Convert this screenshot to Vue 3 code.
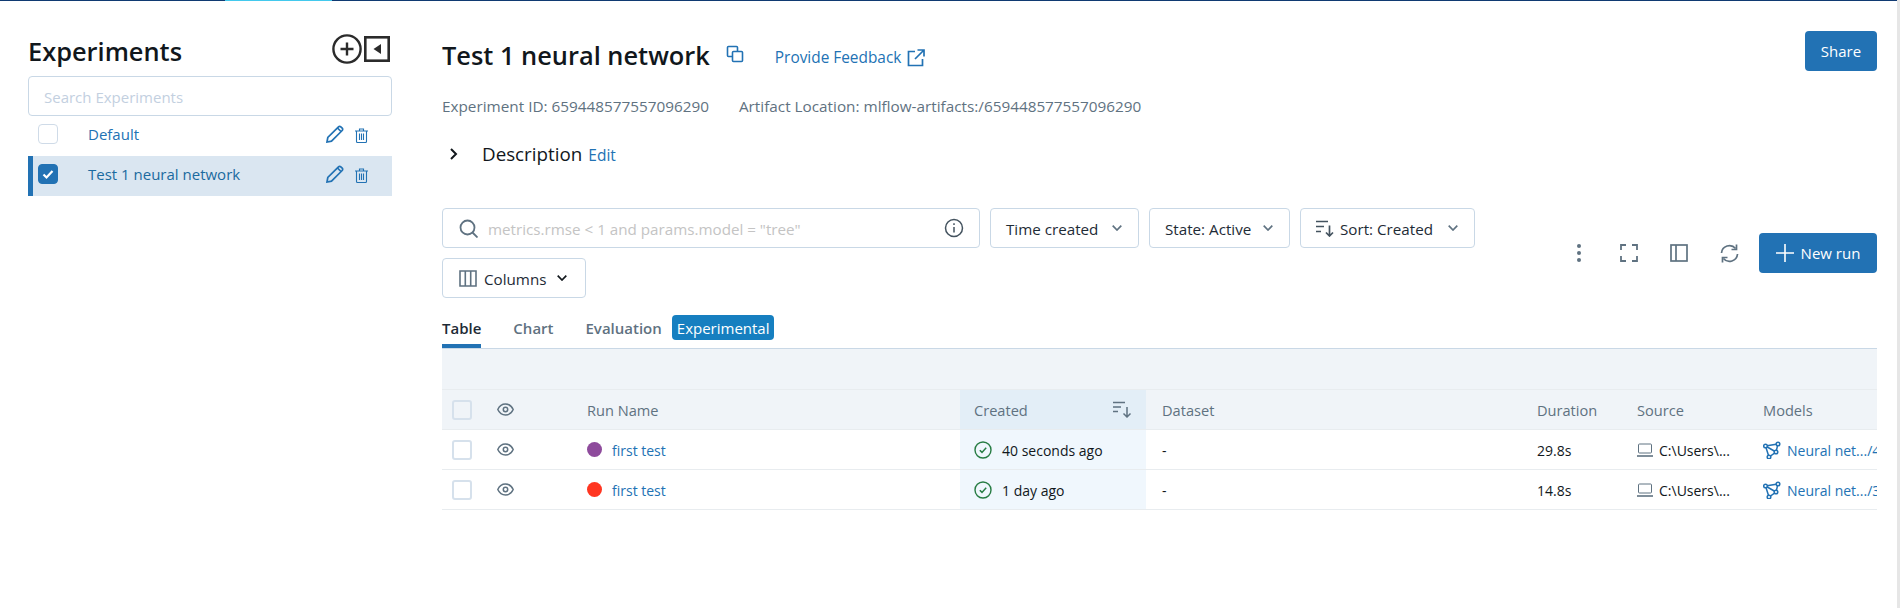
<script setup>
const experiments = [
  { name: 'Default', active: false },
  { name: 'Test 1 neural network', active: true },
]

const runs = [
  { name: 'first test', color: '#8e4b9c', created: '40 seconds ago', duration: '29.8s', model: 'Neural net.../4' },
  { name: 'first test', color: '#ff3621', created: '1 day ago', duration: '14.8s', model: 'Neural net.../3' },
]
</script>

<template>
  <div class="page">
    <div class="topbar"><div class="topbar-accent"></div></div>
    <div class="layout">
      <aside class="sidebar">
        <div class="sidebar-head">
          <h1>Experiments</h1>
          <div class="sidebar-tools">
            <svg width="30" height="30" viewBox="0 0 30 30" fill="none" stroke="#2b2b2b" stroke-width="2.4"><circle cx="15" cy="15" r="13.6" /><path d="M15 8.500v13M8.500 15h13" /></svg>
            <svg class="collapse" width="26" height="26" viewBox="0 0 26 26" fill="none"><rect x="1.300" y="1.300" width="23.400" height="23.400" stroke="#2b2b2b" stroke-width="2.600" /><path d="M17 8v10l-7.500-5z" fill="#2b2b2b" /></svg>
          </div>
        </div>
        <div class="side-search"><span class="txt">Search Experiments</span></div>
        <div v-for="exp in experiments" :key="exp.name" class="exp-row" :class="{ active: exp.active }">
          <span class="exp-check">
            <svg v-if="exp.active" width="14" height="14" viewBox="0 0 14 14" fill="none" stroke="#fff" stroke-width="2.200"><path d="M2.500 7.500l3 3 6-6.500" /></svg>
          </span>
          <span class="exp-name">{{ exp.name }}</span>
          <svg class="exp-edit" width="18" height="18" viewBox="0 0 18 18" fill="none" stroke="#2272b4" stroke-width="1.700"><path d="M1 17l.8-4.500L12.500 1.800a1.600 1.600 0 0 1 2.300 0l1.400 1.400a1.600 1.600 0 0 1 0 2.300L5.500 16.200z" /><path d="M11.500 3l3.500 3.500" /></svg>
          <svg class="exp-delete" width="13" height="15" viewBox="0 0 13 15" fill="none" stroke="#2272b4" stroke-width="1.100"><path d="M0 3h13M4.500 3V1h4v2M1.500 3v10.500a1 1 0 0 0 1 1h8a1 1 0 0 0 1-1V3M4.500 5.500v6.500M6.500 5.500v6.500M8.500 5.500v6.500" /></svg>
        </div>
      </aside>

      <main class="main">
        <div class="head">
          <div class="head-title">
            <h2>Test 1 neural network</h2>
            <svg class="copy-icon" width="18" height="18" viewBox="0 0 18 18" fill="none" stroke="#2272b4" stroke-width="1.600"><rect x="1.500" y="1.500" width="10" height="10" rx="1" /><rect x="6.500" y="6.500" width="10" height="10" rx="1" fill="#fff" /></svg>
            <a class="feedback">Provide Feedback
              <svg width="18" height="18" viewBox="0 0 18 18" fill="none" stroke="#2272b4" stroke-width="1.700"><path d="M8 2.500H1.500v14h14V10M10.500 1H17v6.500M17 1L8 10" /></svg>
            </a>
          </div>
          <button class="btn-primary share">Share</button>
        </div>

        <div class="meta">
          <span>Experiment ID: 659448577557096290</span>
          <span>Artifact Location: mlflow-artifacts:/659448577557096290</span>
        </div>

        <div class="description">
          <svg width="10" height="12" viewBox="0 0 10 12" fill="none" stroke="#11171c" stroke-width="2"><path d="M2 1l5 5-5 5" /></svg>
          <span class="desc-label">Description</span>
          <a class="desc-edit">Edit</a>
        </div>

        <div class="toolbar">
          <div class="filters">
            <div class="run-search">
              <svg width="19" height="19" viewBox="0 0 19 19" fill="none" stroke="#5f7281" stroke-width="1.800"><circle cx="8.500" cy="8.500" r="7" /><path d="M13.500 13.500l5 5" /></svg>
              <span class="run-search-text">metrics.rmse &lt; 1 and params.model = "tree"</span>
              <svg width="20" height="20" viewBox="0 0 20 20" fill="none" stroke="#44535f" stroke-width="1.500"><circle cx="10" cy="10" r="8.500" /><path d="M10 9v5.500M10 5.200v1.800" /></svg>
            </div>
            <div class="dropdown time"><span class="txt">Time created</span>
              <svg class="chev" width="10" height="6" viewBox="0 0 10 6" fill="none" stroke="#5f7281" stroke-width="1.700"><path d="M.7.7L5 5l4.300-4.300" /></svg>
            </div>
            <div class="dropdown state"><span class="txt">State: Active</span>
              <svg class="chev" width="10" height="6" viewBox="0 0 10 6" fill="none" stroke="#5f7281" stroke-width="1.700"><path d="M.7.7L5 5l4.300-4.300" /></svg>
            </div>
            <div class="dropdown sort">
              <svg width="18" height="17" viewBox="0 0 18 17" fill="none" stroke="#44535f" stroke-width="1.700"><path d="M0 1.500h12M0 6.500h8M0 11.500h5M13.500 5.500v10.500M10 12.500l3.500 3.500 3.500-3.500" /></svg>
              <span class="txt">Sort: Created</span>
              <svg class="chev" width="10" height="6" viewBox="0 0 10 6" fill="none" stroke="#5f7281" stroke-width="1.700"><path d="M.7.7L5 5l4.300-4.300" /></svg>
            </div>
            <div class="dropdown columns">
              <svg width="18" height="17" viewBox="0 0 18 17" fill="none" stroke="#5f7281" stroke-width="1.600"><path d="M1 1h16v15H1zM6.300 1v15M11.700 1v15" /></svg>
              <span class="txt">Columns</span>
              <svg class="columns-chev" width="10" height="6" viewBox="0 0 10 6" fill="none" stroke="#11171c" stroke-width="1.700"><path d="M.7.7L5 5l4.300-4.300" /></svg>
            </div>
          </div>
          <div class="actions">
            <span class="action">
              <svg width="4" height="18" viewBox="0 0 4 18" fill="#5f7281"><circle cx="2" cy="2" r="2" /><circle cx="2" cy="9" r="2" /><circle cx="2" cy="16" r="2" /></svg>
            </span>
            <span class="action">
              <svg width="18" height="18" viewBox="0 0 18 18" fill="none" stroke="#5f7281" stroke-width="1.800"><path d="M1 6V1h5M12 1h5v5M17 12v5h-5M6 17H1v-5" /></svg>
            </span>
            <span class="action">
              <svg width="18" height="18" viewBox="0 0 18 18" fill="none" stroke="#5f7281" stroke-width="1.700"><rect x="1" y="1" width="16" height="16" /><path d="M6 1v16" /></svg>
            </span>
            <span class="action">
              <svg width="19" height="19" viewBox="0 0 19 19" fill="none" stroke="#5f7281" stroke-width="1.700"><path d="M1.500 9A8 8 0 0 1 15.600 4.500M17.500 10A8 8 0 0 1 3.400 14.500" /><path d="M16.500.5v5h-5M2.500 18.500v-5h5" /></svg>
            </span>
            <button class="btn-primary new-run">
              <svg width="18" height="18" viewBox="0 0 18 18" fill="none" stroke="#fff" stroke-width="1.600"><path d="M9 0v18M0 9h18" /></svg>
              New run
            </button>
          </div>
        </div>

        <div class="tabs">
          <span class="tab selected">Table</span>
          <span class="tab">Chart</span>
          <span class="tab eval">Evaluation</span>
          <span class="badge">Experimental</span>
        </div>

        <div class="grid-band"></div>
        <div class="grid-row grid-head">
          <div class="cell"><span class="box"></span></div>
          <div class="cell">
            <svg width="17" height="13" viewBox="0 0 17 13" fill="none" stroke="#5f7281" stroke-width="1.500"><path d="M.8 6.500C2.500 2.800 5.200 1 8.500 1s6 1.800 7.700 5.500c-1.700 3.700-4.400 5.500-7.700 5.500S2.500 10.200.8 6.500z" /><circle cx="8.500" cy="6.500" r="2.200" /></svg>
          </div>
          <div class="cell">Run Name</div>
          <div class="cell created-head">
            <span>Created</span>
            <svg width="19" height="17" viewBox="0 0 19 17" fill="none" stroke="#5f7281" stroke-width="1.500"><path d="M0 1.500h12M0 6h8M0 10.500h5M14 6v10M10.500 12.500l3.500 3.500 3.500-3.500" /></svg>
          </div>
          <div class="cell">Dataset</div>
          <div class="cell">Duration</div>
          <div class="cell">Source</div>
          <div class="cell">Models</div>
        </div>
        <div v-for="(run, i) in runs" :key="i" class="grid-row">
          <div class="cell"><span class="box"></span></div>
          <div class="cell">
            <svg width="17" height="13" viewBox="0 0 17 13" fill="none" stroke="#5f7281" stroke-width="1.500"><path d="M.8 6.500C2.500 2.800 5.200 1 8.500 1s6 1.800 7.700 5.500c-1.700 3.700-4.400 5.500-7.700 5.500S2.500 10.200.8 6.500z" /><circle cx="8.500" cy="6.500" r="2.200" /></svg>
          </div>
          <div class="cell run-name">
            <span class="dot" :style="{ background: run.color }"></span>
            <a class="txt">{{ run.name }}</a>
          </div>
          <div class="cell created">
            <svg width="18" height="18" viewBox="0 0 18 18" fill="none" stroke="#277c43" stroke-width="1.400"><circle cx="9" cy="9" r="8" /><path d="M5.800 9.200l2.200 2.200 4.200-4.600" stroke-width="1.500" /></svg>
            <span class="txt">{{ run.created }}</span>
          </div>
          <div class="cell"><span class="txt">-</span></div>
          <div class="cell"><span class="txt">{{ run.duration }}</span></div>
          <div class="cell source">
            <svg width="16" height="14" viewBox="0 0 16 14" fill="none" stroke="#5f7281" stroke-width="1"><rect x="1.500" y="1" width="13" height="9" rx="1" /><path d="M0 13h16" stroke-width="1.600" /></svg>
            <span class="txt">C:\Users\...</span>
          </div>
          <div class="cell model">
            <svg width="18" height="18" viewBox="0 0 18 18" fill="none" stroke="#2272b4" stroke-width="1.500"><path d="M2.500 5L15 3l-2 8-7 5zM2.500 5L13 11" /><circle cx="2.500" cy="5" r="1.800" fill="#fff" /><circle cx="15" cy="3" r="1.800" fill="#fff" /><circle cx="13" cy="11" r="1.800" fill="#fff" /><circle cx="6" cy="16" r="1.800" fill="#fff" /></svg>
            <a class="txt">{{ run.model }}</a>
          </div>
        </div>
      </main>
    </div>
    <div class="scrollbar"></div>
  </div>
</template>

<style scoped>
.page {
  position: relative;
  width: 1900px;
  height: 608px;
  overflow: hidden;
  background: #fff;
  color: #11171c;
  font-family: "Open Sans", "Liberation Sans", sans-serif;
  font-size: 15px;
}

.txt {
  padding-top: 2px;
}

.topbar {
  height: 1px;
  background: #103a72;
}

.topbar-accent {
  width: 107px;
  height: 1px;
  margin-left: 225px;
  background: #43c9ed;
}

.layout {
  display: flex;
  padding: 0 23px 0 28px;
}

.sidebar {
  flex: none;
  width: 364px;
  margin-right: 50px;
  padding-top: 30px;
}

.sidebar-head {
  display: flex;
  align-items: flex-start;
  justify-content: space-between;
  height: 45px;
}

.sidebar-head h1 {
  margin: 0;
  font-size: 25.4px;
  font-weight: 600;
  line-height: 40px;
}

.sidebar-tools {
  display: flex;
  align-items: center;
  gap: 2px;
  margin: 3px 2px 0 0;
}

.side-search {
  display: flex;
  align-items: center;
  box-sizing: border-box;
  height: 40px;
  padding-left: 15px;
  border: 1px solid #c9d8e6;
  border-radius: 4px;
  color: #c3d0df;
}

.exp-row {
  display: flex;
  align-items: center;
  box-sizing: border-box;
  height: 40px;
  padding: 0 0 4px 10px;
  color: #2272b4;
}

.exp-row.active {
  padding-left: 5px;
  border-left: 5px solid #2272b4;
  background: #dae6f1;
  color: #1b6a9f;
}

.exp-check {
  display: flex;
  align-items: center;
  justify-content: center;
  flex: none;
  box-sizing: border-box;
  width: 20px;
  height: 20px;
  border: 1px solid #cfdbe8;
  border-radius: 4px;
  background: #fff;
}

.active .exp-check {
  border-color: #2272b4;
  background: #2272b4;
}

.exp-name {
  flex: 1;
  margin-left: 30px;
}

.exp-edit {
  margin-right: 11px;
}

.exp-delete {
  margin: 2px 24px 0 0;
}

.main {
  flex: 1;
  min-width: 0;
  padding-top: 30px;
}

.head {
  display: flex;
  align-items: flex-start;
  justify-content: space-between;
  height: 40px;
}

.head-title {
  display: flex;
  align-items: center;
  height: 50px;
}

.head-title h2 {
  margin: -2px 0 0;
  font-size: 25.4px;
  font-weight: 600;
  white-space: nowrap;
}

.copy-icon {
  margin: -4px 0 0 16px;
}

.feedback {
  display: flex;
  align-items: center;
  gap: 6px;
  margin: 3px 0 0 31px;
  color: #2272b4;
  font-size: 15.400px;
}

.btn-primary {
  display: flex;
  align-items: center;
  justify-content: center;
  height: 40px;
  border: none;
  border-radius: 4px;
  background: #2272b4;
  color: #fff;
  font: inherit;
  font-size: 15px;
}

.share {
  width: 72px;
}

.new-run {
  gap: 7px;
  width: 118px;
}

.meta {
  display: flex;
  gap: 30px;
  margin-top: 25px;
  color: #5f7281;
  font-size: 15.300px;
  line-height: 20px;
}

.description {
  display: flex;
  align-items: center;
  height: 24px;
  margin-top: 26px;
  padding-left: 7px;
}

.desc-label {
  margin-left: 23px;
  font-size: 18.800px;
}

.desc-edit {
  margin: 2px 0 0 6px;
  color: #2272b4;
  font-size: 15.500px;
}

.toolbar {
  display: flex;
  align-items: center;
  justify-content: space-between;
  margin-top: 42px;
}

.filters {
  display: flex;
  flex-wrap: wrap;
  gap: 10px;
  width: 1040px;
}

.run-search,
.dropdown {
  display: flex;
  align-items: center;
  box-sizing: border-box;
  height: 40px;
  border: 1px solid #c9d8e6;
  border-radius: 4px;
  font-size: 15.200px;
}

.run-search {
  width: 538px;
  padding: 0 15px 0 16px;
}

.run-search-text {
  flex: 1;
  margin-left: 10px;
  padding-top: 2px;
  color: #c4c4c4;
}

.dropdown {
  padding: 0 16px 0 15px;
  color: #1e2b36;
}

.chev {
  margin-left: auto;
}

.columns-chev {
  margin-left: 4px;
}

.time {
  width: 149px;
}

.state {
  width: 141px;
}

.sort {
  gap: 6px;
  width: 175px;
}

.columns {
  gap: 7px;
  padding-left: 16px;
  width: 144px;
}

.actions {
  display: flex;
  align-items: center;
}

.action {
  display: flex;
  align-items: center;
  justify-content: center;
  width: 50px;
}

.action:nth-child(4) {
  margin-right: 5px;
}

.tabs {
  display: flex;
  align-items: flex-start;
  box-sizing: border-box;
  height: 50px;
  padding-top: 17px;
  color: #5f7281;
  font-weight: 600;
}

.tab {
  box-sizing: border-box;
  height: 33px;
  margin-right: 32px;
  padding-top: 1px;
  line-height: 25px;
}

.tab.selected {
  border-bottom: 4px solid #2272b4;
  color: #1e2b36;
}

.tab.eval {
  margin-right: 10px;
}

.badge {
  height: 25px;
  padding: 1px 5px 0;
  box-sizing: border-box;
  border-radius: 4px;
  background: #167fc0;
  color: #fff;
  font-weight: 400;
  line-height: 24px;
}

.grid-band {
  box-sizing: border-box;
  height: 41px;
  border-top: 1px solid #c9d8e6;
  background: #f0f4f8;
}

.grid-row {
  display: grid;
  grid-template-columns: 38px 95px 385px 186px 379px 100px 126px 126px;
  box-sizing: border-box;
  height: 40px;
  border-top: 1px solid #e8ecef;
  font-size: 14px;
}

.grid-row:last-child {
  height: 41px;
  border-bottom: 1px solid #e8ecef;
}

.grid-head {
  background: #f0f4f8;
  color: #5f7281;
  font-size: 14.600px;
  font-weight: 500;
}

.cell {
  display: flex;
  align-items: center;
  min-width: 0;
  padding-left: 12px;
  overflow: hidden;
  white-space: nowrap;
}

.cell:nth-child(1) {
  padding-left: 10px;
}

.cell:nth-child(2) {
  padding-left: 17px;
}

.cell:nth-child(4) {
  padding-left: 14px;
}

.cell:nth-child(5) {
  padding-left: 16px;
}

.box {
  box-sizing: border-box;
  width: 20px;
  height: 20px;
  border: 2px solid #d6e1ec;
  border-radius: 3px;
  background: #fff;
}

.grid-head .box {
  background: #f0f4f8;
}

.run-name a {
  margin-left: 10px;
  color: #2272b4;
}

.dot {
  flex: none;
  width: 15px;
  height: 15px;
  border-radius: 50%;
}

.created {
  gap: 10px;
  background: #f0f7fd;
}

.created-head {
  justify-content: space-between;
  padding-right: 14px;
  background: #e3eef7;
}

.source {
  gap: 6px;
}

.model {
  gap: 6px;
  color: #2272b4;
}

.model svg {
  flex: none;
}

.scrollbar {
  position: absolute;
  top: 0;
  right: 0;
  width: 3px;
  height: 100%;
  background: #e6e6e6;
}
</style>
